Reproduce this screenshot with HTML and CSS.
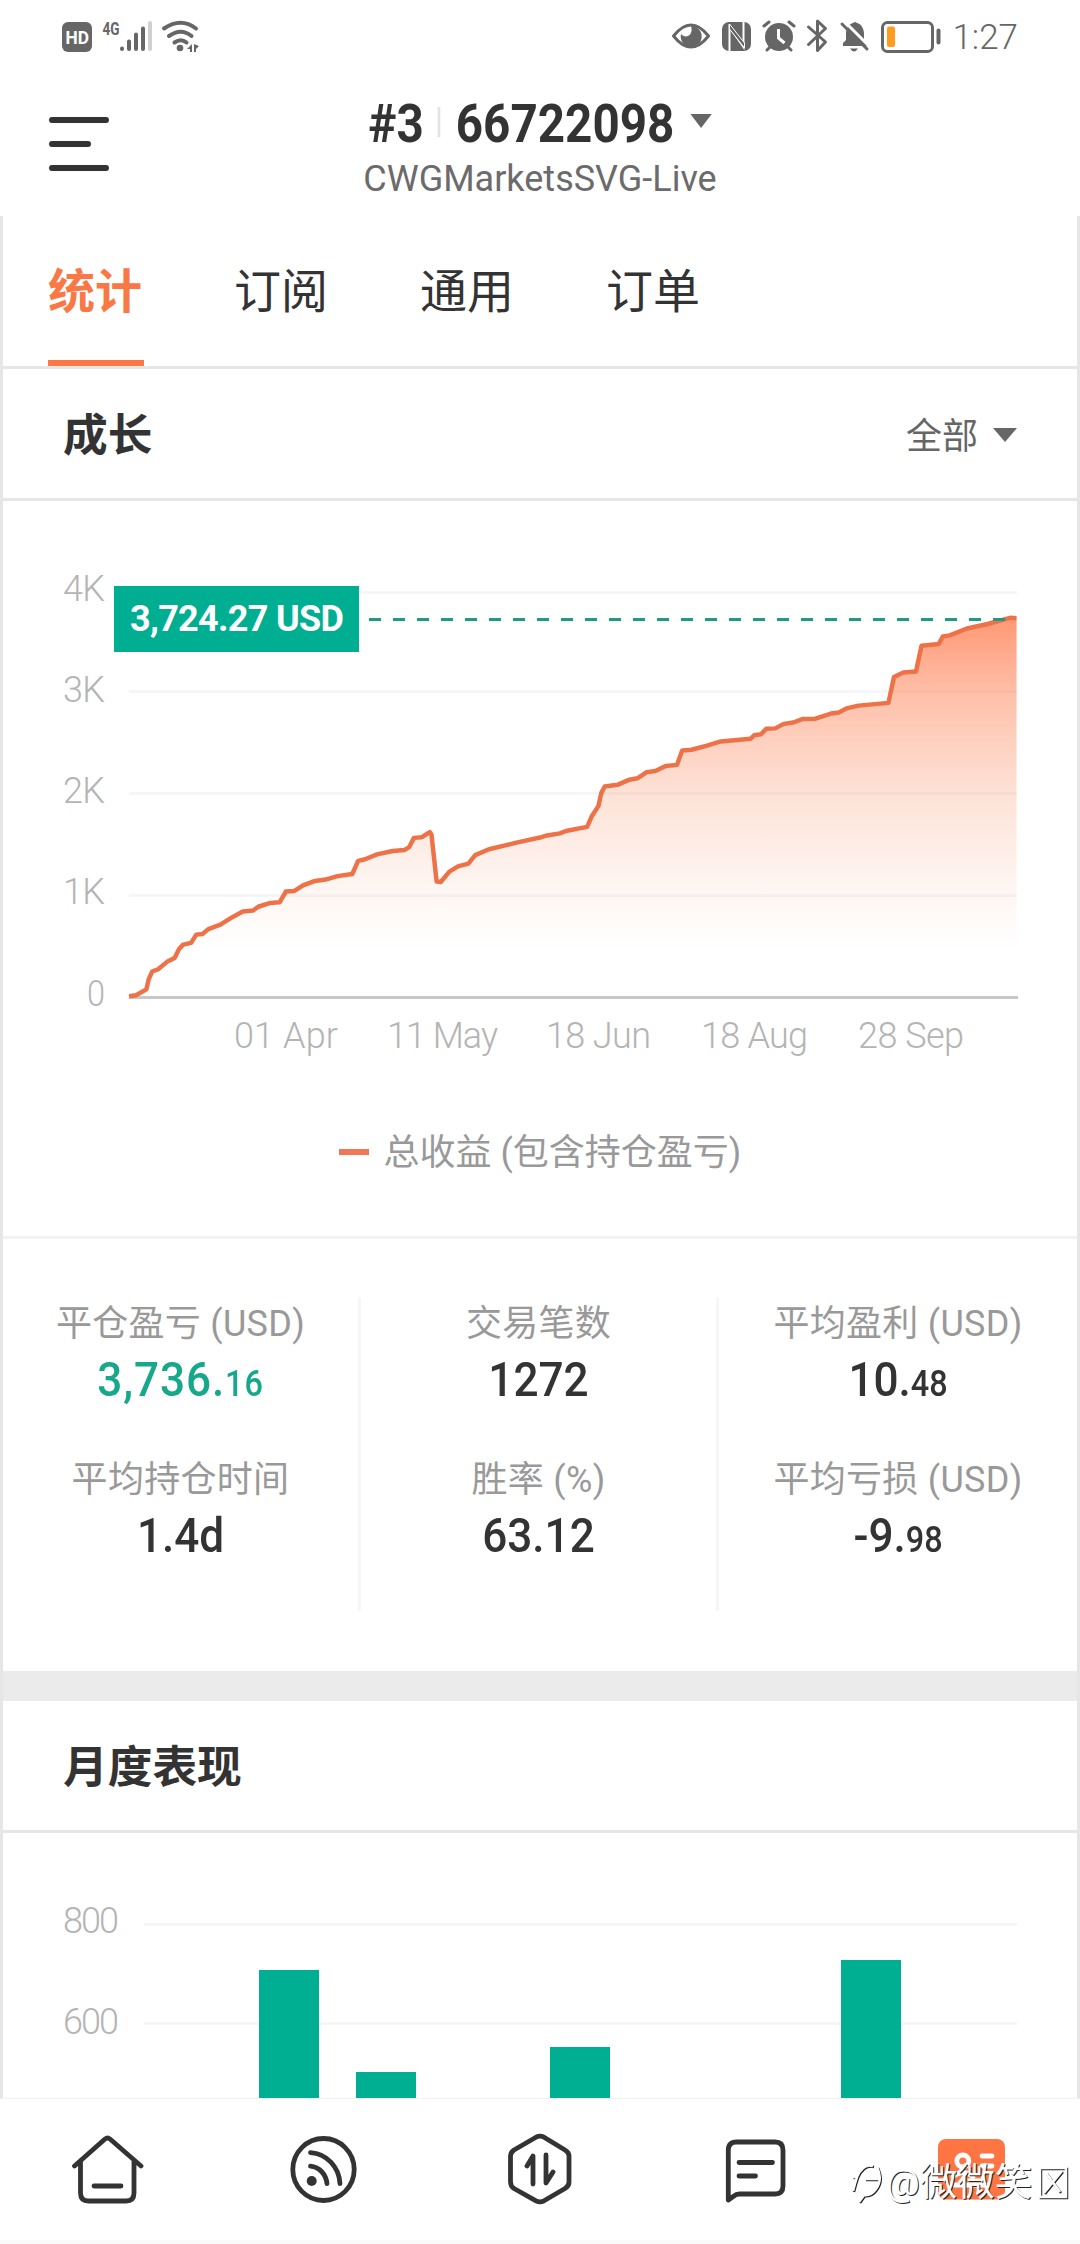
FILE: index.html
```
<!DOCTYPE html>
<html lang="zh-CN">
<head>
  <meta charset="UTF-8" />
  <meta name="viewport" content="width=device-width, initial-scale=1.0" />
  <title>66722098</title>
  <link rel="stylesheet" href="styles.css">
</head>
<body>
  <div class="screen">
    <div class="statusbar">
      <svg class="status-left" width="160" height="50" viewBox="0 0 160 50">
        <rect x="12" y="12" width="30" height="30" rx="6" />
        <text class="hd" x="15.500" y="34" textLength="23.500" lengthAdjust="spacingAndGlyphs">HD</text>
        <text class="net" x="52.500" y="25" textLength="17" lengthAdjust="spacingAndGlyphs">4G</text>
        <g class="round">
          <path d="M72 38.500v.600M79 31.500v7.600M86 24.500v14.600M93 18.500v20.600" />
          <path class="faint" d="M100 13v26" />
        </g>
        <g class="wifi">
          <path d="M114 18.500q17 -11.500 32 0M119 26q12 -8.500 22.500 0M124.500 32.500q6.500 -4.500 12 0" />
        </g>
        <circle cx="130" cy="38" r="3.300" />
        <path d="M142 34v8h-2v-3h-3zM144 34v8h2v-3l3-3z" />
      </svg>
      <div class="status-right">
        <svg width="292" height="50" viewBox="0 0 292 50">
          <path class="line" d="M13.500 26Q31 4 48.500 26Q31 48 13.500 26z" />
          <path d="M31 16a10.500 10.500 0 1 1-10 8c4 5 13 2 10-8z" />
          <rect x="62" y="12" width="29" height="29" rx="7" />
          <path class="cut" d="M69.500 42V17l14 20V11" />
          <path class="thin" d="M69.500 14v5l15 19v-5z" />
          <circle cx="119" cy="27" r="14" />
          <path class="cut wide" d="M118.500 19v9l6 5" />
          <path class="line" d="M104 16l5-4M134 16l-5-4M107 40l4-4M131 40l-4-4" />
          <path class="line" d="M148.500 17l17 15-8 8.500V11l8 7.500-17 16" />
          <path d="M183 36v-3l3-3v-6c0-6 3-10 7-11q2-2 4 0c4 1 7 5 7 11v6l3 6zM190 38.500h8q-4 6-8 0z" />
          <path class="cut wide" d="M184 11l27 27" />
          <path class="line" d="M182 14l25 25" />
          <rect class="line" x="222.500" y="12.500" width="50" height="29" rx="5" />
          <rect class="charge" x="227" y="16.500" width="8" height="20.500" rx="2" />
          <rect x="276.500" y="18.500" width="4" height="16" rx="2" />
        </svg>
        <span class="clock">1:27</span>
      </div>
    </div>

    <header class="header">
      <svg class="menu" width="60" height="54" viewBox="0 0 60 54">
        <path d="M3 3h54M3 27h36M3 51h54" />
      </svg>
      <div class="account">
        <div class="account-no">
          <span>#3</span><i class="sep"></i><span>66722098</span><i class="caret"></i>
        </div>
        <div class="server">CWGMarketsSVG-Live</div>
      </div>
    </header>

    <main class="panel">
      <nav class="tabs">
        <a class="tab active">统计</a>
        <a class="tab">订阅</a>
        <a class="tab">通用</a>
        <a class="tab">订单</a>
      </nav>

      <div class="section-head">
        <h2>成长</h2>
        <span class="filter">全部<i class="caret"></i></span>
      </div>

      <section class="growth">
        <svg class="chart" width="1074" height="580" viewBox="3 0 1074 580">
          <defs>
            <linearGradient id="fill" gradientUnits="userSpaceOnUse" x1="0" y1="226" x2="0" y2="1325">
              <stop offset="0" stop-color="#ff7443" stop-opacity=".74" />
              <stop offset=".2" stop-color="#ff7443" stop-opacity=".46" />
              <stop offset=".46" stop-color="#f97845" stop-opacity=".22" />
              <stop offset=".73" stop-color="#f97845" stop-opacity=".06" />
              <stop offset=".88" stop-color="#f97845" stop-opacity="0" />
            </linearGradient>
          </defs>
          <g class="grid">
            <path d="M129 91.500H1017M129 190.500H1017M129 292.500H1017M129 394.500H1017" />
          </g>
          <path class="axis" d="M129 496.500H1018" />
          <g class="plot" transform="translate(0 39) scale(.34436)">
            <path fill="url(#fill)" d="M375 1325L395 1322 425 1305 432 1275 442 1253 460 1246 485 1225 507 1214 520 1188 532 1175 555 1170 570 1146 588 1144 605 1130 640 1117 670 1098 705 1079 735 1076 750 1065 785 1054 812 1052 830 1021 855 1019 880 1003 915 990 945 986 980 976 1023 970 1040 932 1060 927 1095 913 1140 903 1175 900 1188 892 1202 865 1225 863 1248 848 1253 856 1268 992 1280 993 1305 963 1330 948 1360 940 1380 915 1420 898 1470 886 1500 879 1568 864 1588 858 1626 852 1643 845 1705 833 1718 803 1738 772 1746 735 1756 716 1793 711 1828 696 1851 692 1878 674 1903 671 1933 656 1966 653 1981 611 2008 609 2053 597 2093 585 2180 577 2190 567 2210 564 2225 548 2251 547 2276 534 2303 530 2330 520 2368 519 2413 504 2436 501 2458 489 2493 481 2580 473 2596 398 2623 385 2660 382 2676 307 2726 302 2738 280 2758 277 2808 257 2868 244 2933 226 2952 227V1325z" />
            <path class="curve" d="M375 1325L395 1322 425 1305 432 1275 442 1253 460 1246 485 1225 507 1214 520 1188 532 1175 555 1170 570 1146 588 1144 605 1130 640 1117 670 1098 705 1079 735 1076 750 1065 785 1054 812 1052 830 1021 855 1019 880 1003 915 990 945 986 980 976 1023 970 1040 932 1060 927 1095 913 1140 903 1175 900 1188 892 1202 865 1225 863 1248 848 1253 856 1268 992 1280 993 1305 963 1330 948 1360 940 1380 915 1420 898 1470 886 1500 879 1568 864 1588 858 1626 852 1643 845 1705 833 1718 803 1738 772 1746 735 1756 716 1793 711 1828 696 1851 692 1878 674 1903 671 1933 656 1966 653 1981 611 2008 609 2053 597 2093 585 2180 577 2190 567 2210 564 2225 548 2251 547 2276 534 2303 530 2330 520 2368 519 2413 504 2436 501 2458 489 2493 481 2580 473 2596 398 2623 385 2660 382 2676 307 2726 302 2738 280 2758 277 2808 257 2868 244 2933 226 2952 227" />
          </g>
          <path class="marker" d="M369 118.500H1006" />
          <rect class="badge" x="114" y="85" width="245" height="66" />
          <text class="badge-text" x="130" y="130" textLength="214">3,724.27 USD</text>
          <g class="labels">
            <text x="63" y="100" textLength="42">4K</text>
            <text x="63" y="201" textLength="42">3K</text>
            <text x="63" y="302" textLength="42">2K</text>
            <text x="63" y="403" textLength="42">1K</text>
            <text x="87" y="505" textLength="18" lengthAdjust="spacingAndGlyphs">0</text>
            <text x="234" y="547" textLength="104">01 Apr</text>
            <text x="387" y="547" textLength="111">11 May</text>
            <text x="546" y="547" textLength="105">18 Jun</text>
            <text x="701" y="547" textLength="107">18 Aug</text>
            <text x="858" y="547" textLength="106">28 Sep</text>
          </g>
        </svg>
        <div class="legend"><i class="dash"></i><span>总收益 (包含持仓盈亏)</span></div>
      </section>

      <section class="stats">
        <div class="col">
          <div class="label">平仓盈亏 (USD)</div>
          <div class="value green">3,736.<small>16</small></div>
          <div class="label">平均持仓时间</div>
          <div class="value">1.4d</div>
        </div>
        <div class="col">
          <div class="label">交易笔数</div>
          <div class="value">1272</div>
          <div class="label">胜率 (%)</div>
          <div class="value">63.12</div>
        </div>
        <div class="col">
          <div class="label">平均盈利 (USD)</div>
          <div class="value">10.<small>48</small></div>
          <div class="label">平均亏损 (USD)</div>
          <div class="value">-9.<small>98</small></div>
        </div>
      </section>

      <div class="band"></div>

      <div class="section-head">
        <h2>月度表现</h2>
      </div>
      <svg class="chart" width="1074" height="265" viewBox="3 0 1074 265">
        <g class="grid"><path d="M144 91.500H1017M144 190.500H1017" /></g>
        <g class="labels">
          <text x="63" y="100" textLength="56">800</text>
          <text x="63" y="201" textLength="56">600</text>
        </g>
        <g class="bars">
          <rect x="259" y="137" width="60" height="128" />
          <rect x="356" y="239" width="60" height="26" />
          <rect x="550" y="214" width="60" height="51" />
          <rect x="841" y="127" width="60" height="138" />
        </g>
      </svg>
    </main>

    <nav class="bottom-nav">
      <a>
        <svg viewBox="0 0 72 72">
          <path d="M2.500 33L33 6q2.500-2 5 0l31 27M8.500 28.500V60q0 8 8 8H54q8 0 8-8V28.500M22 53h27" />
        </svg>
      </a>
      <a>
        <svg viewBox="0 0 72 72">
          <ellipse cx="35.500" cy="36.500" rx="30.700" ry="31" />
          <path d="M22.500 33.200c9 1 15.500 8 16.500 17.500M22.500 19.700c16 1 28.500 14 29.500 31" />
          <circle class="solid" cx="23.700" cy="48" r="5" />
        </svg>
      </a>
      <a>
        <svg viewBox="0 0 72 72">
          <path d="M32 4.200q4-2 8 0L61 17q4 2.500 4 6v26q0 4-4 6.500L40 67.800q-4 2-8 0L10 55.500q-3.500-2.500-3.500-6.500V23q0-3.500 3.500-6zM23 33l6-10v28M42 22v28l7-11" />
        </svg>
      </a>
      <a>
        <svg viewBox="0 0 72 72">
          <path d="M8.300 67V17q0-8 8-8H55q8 0 8 8v36q0 8-8 8H19.500q-3.500 0-5.500 2zM19 29.500h33.500M19 43h16.500" />
        </svg>
      </a>
      <a>
        <svg viewBox="0 0 72 72">
          <rect class="card" x="2" y="6" width="67" height="60.500" rx="8" />
          <path class="white" d="M46 23h10M46 33h10M17 44q10-9 20 0M17 52h34" />
          <circle class="white" cx="26.800" cy="28" r="6" />
        </svg>
      </a>
    </nav>

    <div class="watermark">
      <svg width="36" height="44" viewBox="0 0 36 44">
        <path d="M3 29q2-8 4-14H2.500M7 15Q13 1 23 4M15 17h14M27 5q6 12-1 22-5 7-12 6l-5 7" />
      </svg>
      <span>@微微笑</span>
      <svg width="30" height="34" viewBox="0 0 30 34">
        <path d="M2 2h26v29H2zM6 27L24 5M8 7l14 19" />
      </svg>
    </div>
  </div>
</body>
</html>
```
FILE: styles.css
```
* {
  box-sizing: border-box;
}
body {
  margin: 0;
  background: #fff;
  color: #333;
  font-family: Roboto, "Noto Sans CJK SC", sans-serif;
}
.screen {
  position: relative;
  width: 1080px;
  height: 2244px;
  overflow: hidden;
  display: flex;
  flex-direction: column;
  border-bottom: 4px solid #fafafa;
}

/* status bar */
.statusbar {
  height: 72px;
  padding: 10px 62px 0 50px;
  display: flex;
  justify-content: space-between;
  align-items: flex-start;
  fill: #666;
  color: #666;
}
.status-right {
  display: flex;
}
.statusbar .hd {
  fill: #fff;
  font-size: 19px;
  font-weight: 700;
}
.statusbar .net {
  font-size: 19px;
  font-weight: 700;
}
.round,
.wifi,
.statusbar .line {
  fill: none;
  stroke: #666;
  stroke-width: 4;
  stroke-linecap: round;
  stroke-linejoin: round;
}
.statusbar .line {
  stroke-width: 3;
}
.round .faint {
  stroke: #d0d0d0;
}
.cut {
  fill: none;
  stroke: #fff;
  stroke-width: 2;
}
.cut.wide {
  stroke-width: 3;
}
.thin {
  fill: #666;
  stroke: #fff;
}
.charge {
  fill: #ff9c1b;
}
.clock {
  width: 66px;
  font-size: 35px;
  line-height: 56px;
  font-weight: 300;
  text-align: right;
}

/* header */
.header {
  position: relative;
  height: 144px;
  display: flex;
  justify-content: center;
}
.menu {
  position: absolute;
  left: 49px;
  top: 45px;
  fill: none;
  stroke: #333;
  stroke-width: 6;
  stroke-linecap: round;
}
.account {
  display: flex;
  flex-direction: column;
  align-items: center;
  padding-top: 22px;
}
.account-no {
  display: flex;
  height: 60px;
  line-height: 60px;
  font-size: 53.500px;
  font-weight: 700;
  transform: scaleX(.89);
}
.sep {
  width: 3px;
  height: 30px;
  margin: 13px 17px 0 16px;
  background: #e3e3e3;
}
.caret {
  width: 0;
  height: 0;
  border: 12px solid transparent;
  border-top: 14px solid #666;
  border-bottom: 0;
}
.account-no .caret {
  margin: 20px 0 0 18px;
}
.server {
  margin-top: 3px;
  font-size: 36px;
  line-height: 44px;
  color: #6b6b6b;
}

/* panel */
.panel {
  height: 1882px;
  border: solid #e6e6e6;
  border-width: 0 3px;
}
.tabs {
  display: flex;
  gap: 92px;
  height: 153px;
  padding-left: 45px;
  border-bottom: 3px solid #e6e6e6;
}
.tab {
  font-size: 47px;
  line-height: 151px;
  height: 150px;
}
.tab.active {
  width: 96px;
  margin-right: -2px;
  color: #f97845;
  font-weight: 700;
  border-bottom: 6px solid #f97845;
}
.section-head {
  display: flex;
  justify-content: space-between;
  align-items: center;
  height: 132px;
  padding: 0 60px 4px 60px;
  border-bottom: 3px solid #e6e6e6;
}
.section-head h2 {
  margin: 0;
  font-size: 44.700px;
  font-weight: 700;
}
.filter {
  display: flex;
  align-items: center;
  gap: 15px;
  padding-top: 2px;
  font-size: 36px;
  color: #666;
}
.filter .caret {
  margin-top: 4px;
}
.growth {
  height: 738px;
  border-bottom: 3px solid #f3f3f3;
}
.chart {
  display: block;
}
.grid {
  stroke: #f6f6f6;
  stroke-width: 3;
}
.axis {
  stroke: #c8c8c8;
  stroke-width: 3;
}
.curve {
  fill: none;
  stroke: #ee7248;
  stroke-width: 13;
  stroke-linejoin: round;
}
.marker {
  stroke: #1e9b83;
  stroke-width: 3;
  stroke-dasharray: 12 12;
}
.badge,
.bars {
  fill: #00ae91;
}
.badge-text {
  fill: #fff;
  font-size: 36px;
  font-weight: 700;
}
.labels {
  fill: #b4b4b4;
  font-size: 36px;
  font-weight: 300;
}
.legend {
  display: flex;
  justify-content: center;
  align-items: center;
  height: 52px;
  margin-top: 45px;
  font-size: 36px;
  color: #999;
}
.legend span {
  padding-bottom: 6px;
}
.dash {
  width: 30px;
  height: 6px;
  margin-right: 15px;
  background: #ee7855;
}

/* stats */
.stats {
  display: grid;
  grid-template-columns: 358px 358px 358px;
  height: 432px;
  padding: 59px 0 60px;
}
.col {
  text-align: center;
  border-right: 3px solid #f6f6f6;
}
.col:last-child {
  border-right: 0;
}
.label {
  height: 51px;
  line-height: 53px;
  font-size: 36px;
  letter-spacing: .3px;
  color: #999;
}
.value {
  height: 60px;
  line-height: 62px;
  margin-bottom: 45px;
  font-size: 49px;
  font-weight: 500;
  transform: scaleX(.9);
}
.value small {
  font-size: 36px;
}
.green {
  color: #17a78b;
  letter-spacing: 1px;
}
.band {
  height: 30px;
  background: #ebebec;
}

/* bottom nav */
.bottom-nav {
  display: flex;
  height: 142px;
  padding-bottom: 2px;
  border-top: 1px solid #f0f0f0;
}
.bottom-nav a {
  flex: 1;
  display: flex;
  align-items: center;
  justify-content: center;
}
.bottom-nav svg {
  width: 72px;
  height: 72px;
  fill: none;
  stroke: #333;
  stroke-width: 4.800;
  stroke-linecap: round;
  stroke-linejoin: round;
}
.bottom-nav .solid {
  fill: #333;
  stroke: none;
}
.bottom-nav .card {
  fill: #ff7443;
  stroke: none;
}
.bottom-nav .white {
  stroke: #fff;
}
.watermark {
  position: absolute;
  left: 850px;
  top: 2162px;
  display: flex;
  height: 44px;
  color: #fff;
  font-size: 37.500px;
  line-height: 40px;
  text-shadow: 1px 1px 0 #222;
}
.watermark svg {
  fill: none;
  stroke: #fff;
  stroke-width: 2.500;
  filter: drop-shadow(1px 1px 0 #222);
}
.watermark svg:last-child {
  margin: 4px 0 0 6px;
}
```
